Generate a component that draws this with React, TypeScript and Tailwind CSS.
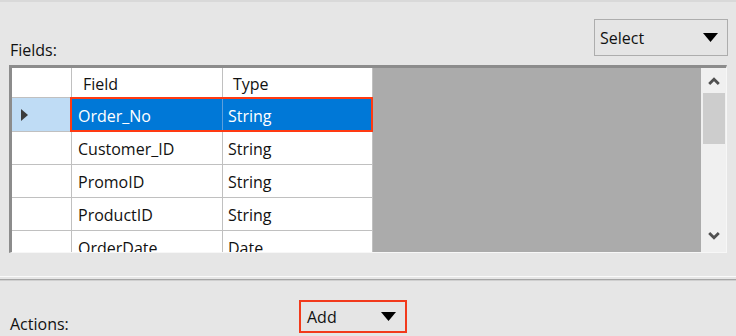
import React from "react";

const rows = [
  { f: "Order_No", t: "String", sel: true },
  { f: "Customer_ID", t: "String" },
  { f: "PromoID", t: "String" },
  { f: "ProductID", t: "String" },
  { f: "OrderDate", t: "Date" },
];

function Tri() {
  return (
    <svg width="15" height="9" viewBox="0 0 15 9">
      <path d="M0 0 H15 L7.5 9 Z" fill="#000" />
    </svg>
  );
}

export default function App() {
  return (
    <div
      className="w-[736px] h-[336px] overflow-hidden bg-[#e6e6e6] border-t-2 border-[#d9d9d9] text-[16px] text-[#111]"
      style={{ fontFamily: "'Open Sans', 'Noto Sans', sans-serif" }}
    >
      {/* header */}
      <div className="h-[63px] flex justify-between pl-[10px] pr-[8px]">
        <span className="mt-[37px] leading-[22px]">Fields:</span>
        <div className="mt-[17px] w-[134px] h-[37px] border border-[#adadad] bg-[#e5e5e5] flex items-center justify-between pl-[5px] pr-[9px]">
          <span className="leading-[20px]">Select</span>
          <Tri />
        </div>
      </div>

      {/* grid */}
      <div className="ml-[9px] w-[718px] h-[188px] border-t-[3px] border-l-[3px] border-r border-b border-t-[#8c8c8c] border-l-[#8c8c8c] border-r-[#f7f7f7] border-b-[#f7f7f7] flex">
        <div className="flex-1 bg-[#ababab] overflow-hidden">
          <div className="w-[361px] bg-white">
            <div className="flex h-[30px] border-b border-[#c0c0c0]">
              <div className="w-[60px] border-r border-[#c0c0c0]" />
              <div className="w-[151px] border-r border-[#c0c0c0] pl-[11px] flex items-center">
                <span className="mt-[3px]">Field</span>
              </div>
              <div className="w-[150px] border-r border-[#c0c0c0] pl-[10px] flex items-center">
                <span className="mt-[3px]">Type</span>
              </div>
            </div>
            {rows.map((r, i) => (
              <div
                key={r.f}
                className={`flex border-b border-[#c0c0c0] ${i === 0 ? "h-[34px]" : "h-[33px]"}`}
              >
                <div
                  className={`w-[60px] border-r border-[#c0c0c0] flex items-center pl-[9px] ${r.sel ? "bg-[#bfdcf5]" : ""}`}
                >
                  {r.sel && (
                    <svg width="7" height="12" viewBox="0 0 7 12">
                      <path d="M0 0 L7 6 L0 12 Z" fill="#3c3c3c" />
                    </svg>
                  )}
                </div>
                <div className="relative flex">
                  <div
                    className={`w-[151px] border-r flex items-center pl-[6px] ${r.sel ? "bg-[#0078d7] text-white border-[#5d9fdc]" : "border-[#c0c0c0]"}`}
                  >
                    <span className="mt-[2px]">{r.f}</span>
                  </div>
                  <div
                    className={`w-[150px] border-r flex items-center pl-[5px] ${r.sel ? "bg-[#0078d7] text-white border-[#0078d7]" : "border-[#c0c0c0]"}`}
                  >
                    <span className="mt-[2px]">{r.t}</span>
                  </div>
                  {r.sel && (
                    <span className="absolute left-[-2px] top-[-1px] right-0 bottom-[-1px] border-2 border-[#ff3a12]" />
                  )}
                </div>
              </div>
            ))}
          </div>
        </div>
        {/* scrollbar */}
        <div className="w-[25px] bg-[#f0f0f0] flex flex-col items-center pl-[2px] pr-[1px]">
          <div className="h-[25px] w-full flex items-center justify-center">
            <svg width="12" height="8" viewBox="0 0 12 8">
              <path d="M1.2 7 L6 2.2 L10.8 7" fill="none" stroke="#505050" strokeWidth="2.8" />
            </svg>
          </div>
          <div className="w-full h-[51px] bg-[#cdcdcd]" />
          <div className="flex-1" />
          <div className="h-[25px] w-full flex items-center justify-center mb-[4px]">
            <svg width="12" height="8" viewBox="0 0 12 8">
              <path d="M1.2 1 L6 5.8 L10.8 1" fill="none" stroke="#505050" strokeWidth="2.8" />
            </svg>
          </div>
        </div>
      </div>

      {/* separator */}
      <div className="mt-[23px] h-[4px] border-t border-t-[#fafafa] border-b border-b-[#a6a6a6] bg-[#e6e6e6]" />
      <div className="h-px bg-[#cfcfcf]" />

      {/* actions */}
      <div className="flex items-start pl-[10px]">
        <span className="w-[289px] shrink-0 mt-[32px] leading-[22px]">Actions:</span>
        <div className="mt-[19px] w-[108px] h-[33px] border-2 border-[#f23a1c] bg-[#e5e5e5] flex items-center justify-between pl-[6px] pr-[9px]">
          <span className="leading-[20px]">Add</span>
          <Tri />
        </div>
      </div>
    </div>
  );
}
